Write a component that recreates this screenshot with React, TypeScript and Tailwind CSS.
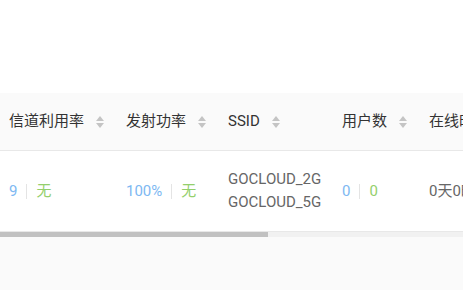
const FONT = { fontFamily: 'Roboto, "Noto Sans CJK SC", sans-serif' };

const COLS = [
  { key: "util", title: "信道利用率", width: "w-[117px]", sort: true },
  { key: "power", title: "发射功率", width: "w-[102px]", sort: true },
  { key: "ssid", title: "SSID", width: "w-[114px]", sort: true },
  { key: "users", title: "用户数", width: "w-[87px]", sort: true },
  { key: "online", title: "在线时长", width: "w-[120px]", sort: false },
];

function SortIcon() {
  return (
    <span className="ml-3 inline-flex flex-col items-center gap-[2px]">
      <svg width="8" height="5" viewBox="0 0 8 5">
        <path d="M4 0 L8 5 L0 5 Z" fill="#c4c4c4" />
      </svg>
      <svg width="8" height="5" viewBox="0 0 8 5">
        <path d="M0 0 L8 0 L4 5 Z" fill="#c4c4c4" />
      </svg>
    </span>
  );
}

function Pair({ a, b }: { a: string; b: string }) {
  return (
    <span className="flex items-center">
      <span className="text-[#7db8f2]">{a}</span>
      <span className="mx-[9px] h-[15px] w-px bg-[#e4e4e4]" />
      <span className="text-[#94cf6c]">{b}</span>
    </span>
  );
}

export default function App() {
  return (
    <div className="flex h-[290px] w-[463px] flex-col overflow-hidden bg-[#fafafa]" style={FONT}>
      <div className="h-[93px] bg-white" />
      <div className="overflow-hidden bg-white">
        <div className="flex h-[58px] w-[560px] items-center border-b border-[#e8e8e8] bg-[#fafafa] text-[15px] text-[#333]">
          {COLS.map((c) => (
            <div key={c.key} className={`${c.width} flex shrink-0 items-center pl-[9px]`}>
              <span>{c.title}</span>
              {c.sort && <SortIcon />}
            </div>
          ))}
        </div>
        <div className="flex h-[81px] w-[560px] items-center border-b border-[#e8e8e8] text-[15px] text-[#666]">
          <div className="w-[117px] shrink-0 pl-[9px]">
            <Pair a="9" b="无" />
          </div>
          <div className="w-[102px] shrink-0 pl-[9px]">
            <Pair a="100%" b="无" />
          </div>
          <div className="w-[114px] shrink-0 pl-[9px] leading-[23px]">
            <div>GOCLOUD_2G</div>
            <div>GOCLOUD_5G</div>
          </div>
          <div className="w-[87px] shrink-0 pl-[9px]">
            <Pair a="0" b="0" />
          </div>
          <div className="w-[120px] shrink-0 pl-[9px] whitespace-nowrap">0天0时0分</div>
        </div>
      </div>
      <div className="h-[5px] bg-[#f1f1f1]">
        <div className="h-full w-[268px] bg-[#c1c1c1]" />
      </div>
    </div>
  );
}
